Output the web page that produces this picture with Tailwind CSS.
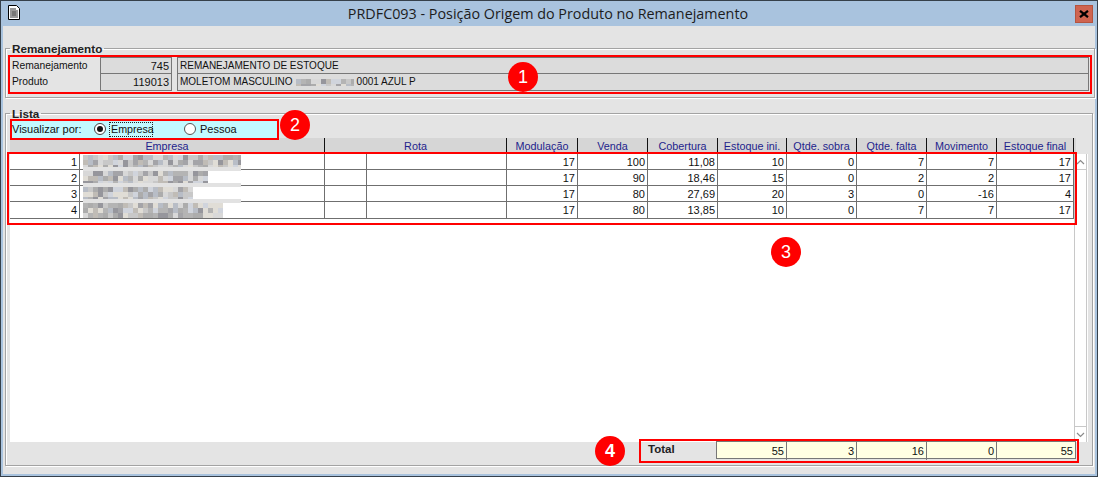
<!DOCTYPE html>
<html>
<head>
<meta charset="utf-8">
<script src="https://cdn.jsdelivr.net/npm/@tailwindcss/browser@4"></script>
</head>
<body class="bg-[#a9c3de]">
<div class="relative w-[1098px] h-[477px] overflow-hidden border border-[#36404a] bg-[#a9c3de] flex flex-col font-['Liberation_Sans',Arial,sans-serif] text-[11px] text-[#111]">
  <!-- title bar -->
  <div class="h-[25px] shrink-0 flex items-center relative">
    <svg class="ml-[6px] mt-[-1px]" width="14" height="16" viewBox="0 0 14 16"><path d="M1.5.5h8l3 3v11h-11z" fill="#fff" stroke="#000"/><path d="M3 4h6M3 6h8M3 8h8M3 10h8M3 12h8" stroke="#333"/><path d="M5 6h4v5H5z" fill="#777"/></svg>
    <div class="absolute left-0 right-[2px] top-0 h-[25px] flex items-center justify-center font-['Open_Sans',sans-serif] text-[14.35px] text-[#1c1c1c] leading-none pt-[6px] pb-[4px]">PRDFC093 - Posição Origem do Produto no Remanejamento</div>
    <div class="absolute right-[4px] top-[4px] w-[18px] h-[18px] bg-[#cf6450] border border-[#b5543f] flex items-center justify-center">
      <svg width="10" height="8" viewBox="0 0 10 8"><path d="M1 0.8l8 6.400M9 0.8l-8 6.400" stroke="#000" stroke-width="2.200"/></svg>
    </div>
  </div>
  <!-- client area -->
  <div class="mx-[2px] h-[448px] bg-[#e4e4e4] px-[2px] pt-[17px] flex flex-col">
    <fieldset class="border border-[#a3a3a3] shadow-[inset_1px_1px_0_#fff,1px_1px_0_#fff] h-[55px] mr-[1px] px-[5px] shrink-0">
      <legend class="ml-[-1px] px-[2px] font-bold text-[11.7px] text-[#222] leading-[11px]">Remanejamento</legend>
      <div class="flex pt-[3px]">
        <div class="w-[89px] leading-[16px] text-[10.3px] pl-[1px] pt-[1px]">
          <div class="h-[16px]">Remanejamento</div>
          <div class="h-[16px]">Produto</div>
        </div>
        <div class="w-[72px] h-[34px] border border-[#777] bg-[#dcdcdc] text-right leading-[16px] shrink-0">
          <div class="h-[16px] border-b border-[#777] pr-[2px]">745</div>
          <div class="h-[16px] pr-[2px]">119013</div>
        </div>
        <div class="ml-[5px] w-[912px] h-[34px] border border-[#777] bg-[#dcdcdc] leading-[16px] text-[10px]">
          <div class="h-[16px] border-b border-[#777] pl-[2px]">REMANEJAMENTO DE ESTOQUE</div>
          <div class="h-[16px] pl-[2px] flex items-center">MOLETOM MASCULINO <svg data-blur="58,7,7,0" class="mx-[3px]" width="58" height="7"></svg>0001 AZUL P</div>
        </div>
      </div>
    </fieldset>

    <fieldset class="mt-[10px] border border-[#a3a3a3] shadow-[inset_1px_1px_0_#fff,1px_1px_0_#fff] h-[358px] mr-[2px] px-[4px] shrink-0">
      <legend class="ml-0 px-[2px] font-bold text-[11.7px] text-[#222] leading-[11px]">Lista</legend>
      <div class="h-[18px] w-[267px] mt-[1px] bg-[#c2f9ff] flex items-center">
        <span class="ml-[2px] w-[82px]">Visualizar por:</span>
        <span class="w-[12px] h-[12px] rounded-full border border-[#444] bg-white flex items-center justify-center"><span class="w-[6px] h-[6px] rounded-full bg-[#111]"></span></span>
        <span class="ml-[3px] w-[44px] h-[15px] border border-dotted border-[#222] leading-[13px] px-[1px] text-[10.7px]">Empresa</span>
        <span class="ml-[31px] w-[12px] h-[12px] rounded-full border border-[#555] bg-white"></span>
        <span class="ml-[4px]">Pessoa</span>
      </div>
      <!-- header -->
      <div class="grid grid-cols-[315px_182px_71px_70px_70px_69px_70px_70px_70px_77px] w-[1066px] h-[16px] bg-[#d6d6d6] text-[#1e1e8c] text-[10.8px] text-center leading-[16px]">
        <div class="border-r border-[#111]">Empresa</div>
        <div class="border-r border-[#111]">Rota</div>
        <div class="border-r border-[#111]">Modulação</div>
        <div class="border-r border-[#111]">Venda</div>
        <div class="border-r border-[#111]">Cobertura</div>
        <div class="border-r border-[#111]">Estoque ini.</div>
        <div class="border-r border-[#111]">Qtde. sobra</div>
        <div class="border-r border-[#111]">Qtde. falta</div>
        <div class="border-r border-[#111]">Movimento</div>
        <div class="border-r border-[#111]">Estoque final</div>
      </div>
      <!-- grid -->
      <div class="w-[1078px] h-[288px] bg-white flex">
        <div class="w-[1065px] shrink-0 text-right leading-[16px]">
          <div class="grid grid-cols-[70px_245px_42px_140px_71px_70px_70px_69px_70px_70px_70px_77px] w-[1066px] [&>*]:h-[16px] [&>*:nth-last-child(-n+12)]:h-[17px] [&>*]:border-r [&>*]:border-b [&>*]:border-[#6f6f6f] [&>*]:pr-[2px]">
            <div>1</div><div class="!pr-0 !pl-[3px] flex items-start"><svg data-blur="158,12,158,1" class="mt-[1px]" width="158" height="16"></svg></div><div></div><div></div><div>17</div><div>100</div><div>11,08</div><div>10</div><div>0</div><div>7</div><div>7</div><div>17</div>
            <div>2</div><div class="!pr-0 !pl-[3px] flex items-start"><svg data-blur="125,12,158,2" class="mt-[1px]" width="158" height="16"></svg></div><div></div><div></div><div>17</div><div>90</div><div>18,46</div><div>15</div><div>0</div><div>2</div><div>2</div><div>17</div>
            <div>3</div><div class="!pr-0 !pl-[3px] flex items-start"><svg data-blur="108,12,158,3" class="mt-[1px]" width="158" height="16"></svg></div><div></div><div></div><div>17</div><div>80</div><div>27,69</div><div>20</div><div>3</div><div>0</div><div>-16</div><div>4</div>
            <div>4</div><div class="!pr-0 !pl-[3px] flex items-start"><svg data-blur="140,14,0,4" class="mt-[1px]" width="158" height="15"></svg></div><div></div><div></div><div>17</div><div>80</div><div>13,85</div><div>10</div><div>0</div><div>7</div><div>7</div><div>17</div>
          </div>
        </div>
        <!-- scrollbar -->
        <div class="w-[13px] ml-[-1px] shrink-0 bg-white border-x border-[#c8c8c8] flex flex-col justify-between">
          <div class="h-[16px] border-b border-[#c8c8c8] flex items-center justify-center"><svg width="9" height="6" viewBox="0 0 9 6"><path d="M1 5l3.500-3.500L8 5" fill="none" stroke="#8a8a8a" stroke-width="1.200"/></svg></div>
          <div class="h-[16px] border-t border-[#c8c8c8] flex items-center justify-center"><svg width="9" height="6" viewBox="0 0 9 6"><path d="M1 1l3.500 3.500L8 1" fill="none" stroke="#8a8a8a" stroke-width="1.200"/></svg></div>
        </div>
      </div>
      <!-- total -->
      <div class="flex w-[1066px] justify-end">
        <div class="w-[68px] font-bold text-[#222] text-[11.5px] leading-[14px]">Total</div>
        <div class="grid grid-cols-[70px_70px_70px_70px_78px] h-[18px] mt-[-1px] border border-[#777] bg-[#ffffe3] text-right leading-[18px] [&>*]:pr-[2px]">
          <div class="border-r border-[#777]">55</div>
          <div class="border-r border-[#777]">3</div>
          <div class="border-r border-[#777]">16</div>
          <div class="border-r border-[#777]">0</div>
          <div>55</div>
        </div>
      </div>
    </fieldset>
  </div>

  <!-- red annotations -->
  <div class="absolute left-[7px] top-[54px] w-[1084px] h-[39px] border-2 border-[#f00]"></div>
  <div class="absolute left-[9px] top-[118px] w-[269px] h-[21px] border-2 border-[#f00]"></div>
  <div class="absolute left-[6px] top-[151px] w-[1070px] h-[73px] border-2 border-[#f00]"></div>
  <div class="absolute left-[638px] top-[438px] w-[440px] h-[24px] border-2 border-[#f00]"></div>
  <div class="absolute left-[507px] top-[61px] w-[30px] h-[30px] rounded-full bg-[#f00] text-white text-[18px] flex items-center justify-center">1</div>
  <div class="absolute left-[279px] top-[109px] w-[30px] h-[30px] rounded-full bg-[#f00] text-white text-[18px] flex items-center justify-center">2</div>
  <div class="absolute left-[770px] top-[236px] w-[30px] h-[30px] rounded-full bg-[#f00] text-white text-[18px] flex items-center justify-center">3</div>
  <div class="absolute left-[594px] top-[435px] w-[30px] h-[30px] rounded-full bg-[#f00] text-white text-[18px] font-bold flex items-center justify-center">4</div>
</div>
<script>
  // mosaic blocks that stand for the censored names: width, mosaic height, pale band width, seed
  document.querySelectorAll('svg[data-blur]').forEach(function (svg) {
    var p = svg.getAttribute('data-blur').split(',').map(Number), w = p[0], h = p[1], band = p[2], s = p[3] * 9973 + 1237;
    var cols = ['#b4b4b4', '#c8c8c8', '#a4a4a8', '#c0bcb6', '#d8d8d8', '#96969c', '#d0d4dc', '#b8bdc6', '#acacac', '#e0ddd6'];
    var out = '';
    for (var y = 0; y < h; y += 5) for (var x = 0; x < w; x += 5) {
      s = (s * 16807) % 2147483647;
      out += '<rect x="' + x + '" y="' + y + '" width="5" height="5" fill="' + cols[(s >> 6) % cols.length] + '"/>';
    }
    if (band) out += '<rect x="0" y="' + h + '" width="' + band + '" height="4" fill="#e2e2e2"/>';
    svg.innerHTML = out;
  });
</script>
</body>
</html>
